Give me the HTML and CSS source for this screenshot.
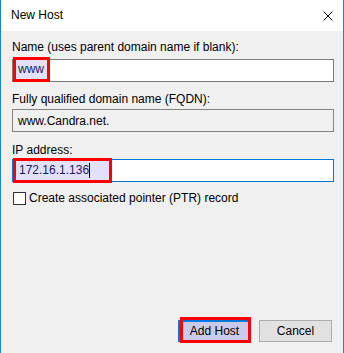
FILE: index.html
```html
<!DOCTYPE html>
<html lang="en">
<head>
    <meta charset="UTF-8">
    <meta name="viewport" content="width=device-width, initial-scale=1.0">
    <title>New Host</title>
    <link rel="stylesheet" href="styles.css">
</head>
<body>
    <div class="dialog">
        <div class="titlebar">
            <span class="title">New Host</span>
            <svg class="close" width="10" height="10" viewBox="0 0 10 10">
                <path d="M0.5 0.5 L9.5 9.5 M9.5 0.5 L0.5 9.5" stroke="#000" stroke-width="1" fill="none"/>
            </svg>
        </div>
        <div class="content">
            <div class="label label-name">Name (uses parent domain name if blank):</div>
            <div class="field">
                <span class="mark mark-name">www</span>
            </div>

            <div class="label label-fqdn">Fully qualified domain name (FQDN):</div>
            <div class="field readonly">www.Candra.net.</div>

            <div class="label label-ip">IP address:</div>
            <div class="field focused">
                <span class="mark mark-ip">172.16.1.136<i class="caret"></i></span>
            </div>

            <div class="check">
                <span class="box"></span>
                <span>Create associated pointer (PTR) record</span>
            </div>

            <div class="buttons">
                <button class="btn btn-default">Add Host</button>
                <button class="btn">Cancel</button>
            </div>
        </div>
    </div>
</body>
</html>
```

FILE: styles.css
```css
body {
    margin: 0;
    font-family: "Liberation Sans", Arial, sans-serif;
    font-size: 12px;
    line-height: 15px;
    color: #000;
    background-color: #f0f0f0;
}

.dialog {
    width: 344px;
    height: 353px;
    box-sizing: border-box;
    border-left: 1px solid #1883d7;
    border-right: 1px solid #1883d7;
    background-color: #f0f0f0;
    display: flex;
    flex-direction: column;
}

.titlebar {
    height: 31px;
    flex-shrink: 0;
    background-color: #fff;
    display: flex;
    align-items: center;
    justify-content: space-between;
    padding: 0 10px;
}

.close {
    display: block;
}

.content {
    flex: 1;
    display: flex;
    flex-direction: column;
    padding: 0 9px 11px 11px;
}

.label-name {
    margin-top: 9px;
    margin-bottom: 4px;
}

.label-fqdn {
    margin-top: 10px;
    margin-bottom: 2px;
}

.label-ip {
    margin-top: 11px;
    margin-bottom: 1px;
}

.field {
    height: 23px;
    box-sizing: border-box;
    border: 1px solid #7a7a7a;
    background-color: #fff;
    display: flex;
    align-items: flex-start;
}

.field.readonly {
    background-color: #f0f0f0;
    border-color: #838383;
    padding: 1px 0 0 5px;
    line-height: 20px;
}

.field.focused {
    border-color: #0078d7;
}

.mark {
    box-sizing: border-box;
    height: 25px;
    border: 3px solid #f00;
    background-color: #e1e1fa;
    color: #1a1a5c;
    line-height: 19px;
    display: flex;
    align-items: center;
}

.mark-name {
    width: 37px;
    margin-top: -3px;
    padding-left: 2px;
}

.mark-ip {
    width: 99px;
    margin-top: -2px;
    padding-left: 3px;
}

.caret {
    display: block;
    width: 1px;
    height: 15px;
    background-color: #000;
}

.check {
    margin-top: 9px;
    margin-left: 1px;
    display: flex;
    align-items: center;
    gap: 3px;
}

.box {
    width: 13px;
    height: 13px;
    box-sizing: border-box;
    border: 1px solid #333;
    background-color: #fff;
}

.buttons {
    margin-top: auto;
    margin-right: 2px;
    display: flex;
    justify-content: flex-end;
    gap: 8px;
}

.btn {
    width: 73px;
    height: 22px;
    box-sizing: border-box;
    padding: 0;
    font-family: inherit;
    font-size: 12px;
    color: #000;
    background-color: #e1e1e1;
    border: 1px solid #adadad;
}

.btn-default {
    position: relative;
    border: 2px solid #0078d7;
    background-color: #c9cbea;
}

.btn-default::after {
    content: "";
    position: absolute;
    top: -5px;
    right: -2px;
    bottom: -3px;
    left: 0;
    border: 3px solid #f00;
}
```
